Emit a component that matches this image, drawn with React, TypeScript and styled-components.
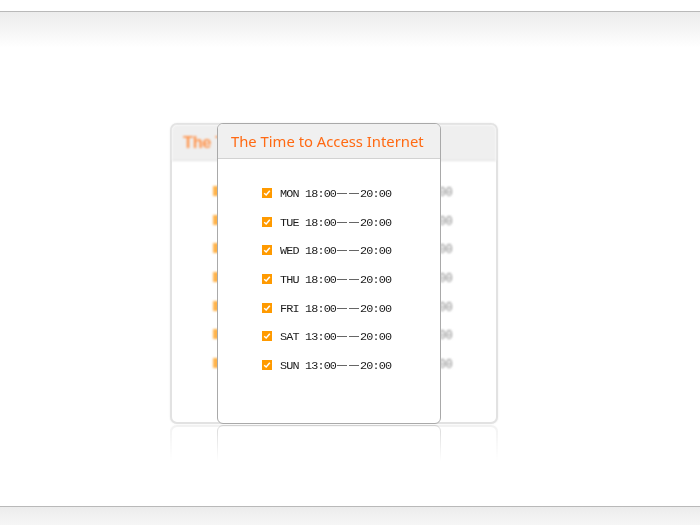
import React from 'react';
import styled, { createGlobalStyle } from 'styled-components';

const GlobalStyle = createGlobalStyle`
  html, body {
    margin: 0;
    padding: 0;
    background: #fff;
  }
`;

const Page = styled.div`
  width: 700px;
  height: 525px;
  display: flex;
  flex-direction: column;
  overflow: hidden;
  background: #fff;
`;

const TopBar = styled.div`
  height: 11px;
  flex: none;
  border-bottom: 1px solid #b9b9b9;
`;

const TopShade = styled.div`
  height: 36px;
  flex: none;
  background: linear-gradient(to bottom, #ececec, #ffffff);
`;

const Stage = styled.div`
  flex: 1;
  padding: 75px 0 0 170px;
`;

const BottomBar = styled.div`
  height: 18px;
  flex: none;
  border-top: 1px solid #b9b9b9;
  background: linear-gradient(to bottom, #ececec, #f6f6f6);
`;

const Holder = styled.div`
  position: relative;
  width: 328px;
  height: 301px;
`;

const BackCard = styled.div`
  width: 328px;
  height: 301px;
  box-sizing: border-box;
  border: 2px solid #e2e2e2;
  border-radius: 7px;
  background: #fff;
  box-shadow: 0 0 2px rgba(0, 0, 0, 0.08);
  -webkit-box-reflect: below 1px linear-gradient(transparent 88%, rgba(255, 255, 255, 0.45));
`;

const BackInner = styled.div`
  filter: blur(0.8px);
`;

const BackHeader = styled.div`
  height: 35px;
  background: #efefef;
  border-bottom: 1px solid #e0e0e0;
  border-radius: 5px 5px 0 0;
  display: flex;
  align-items: center;
  padding-left: 11px;
  font-family: 'Liberation Sans', Arial, sans-serif;
  font-size: 16.5px;
  letter-spacing: -0.4px;
  font-weight: bold;
  color: #ff9650;
  white-space: nowrap;
  overflow: hidden;
`;

const BackList = styled.div`
  padding: 25px 44px 0 41px;
  display: flex;
  flex-direction: column;
`;

const BackRow = styled.div`
  height: 28.7px;
  display: flex;
  align-items: flex-start;
  justify-content: space-between;
  font-family: 'Liberation Mono', monospace;
  font-size: 12px;
  letter-spacing: -0.6px;
  color: #888;
`;

const FrontCard = styled.div`
  position: absolute;
  left: 47px;
  top: 0;
  width: 224px;
  height: 301px;
  box-sizing: border-box;
  border: 1px solid #a9a9a9;
  border-radius: 6px;
  background: #fff;
  overflow: hidden;
  -webkit-box-reflect: below 1px linear-gradient(transparent 88%, rgba(255, 255, 255, 0.45));
`;

const Header = styled.div`
  height: 35px;
  background: #f0f0f0;
  border-bottom: 1px solid #d2d2d2;
  display: flex;
  align-items: center;
  padding: 0 0 0 13px;
  box-sizing: border-box;
  font-family: 'Noto Sans', 'Liberation Sans', sans-serif;
  font-size: 14.8px;
  color: #ff6a13;
`;

const List = styled.div`
  padding: 29px 0 0 44px;
  display: flex;
  flex-direction: column;
`;

const Row = styled.div`
  height: 28.7px;
  display: flex;
  align-items: flex-start;
  gap: 8px;
`;

const Check = styled.span<{ $faded?: boolean }>`
  width: 10px;
  height: 10px;
  margin-top: 0;
  flex: none;
  background: ${(p) => (p.$faded ? '#ffb34a' : '#ff9a00')};
  display: flex;
  align-items: center;
  justify-content: center;
`;

const Label = styled.span`
  display: flex;
  align-items: center;
  font-family: 'Liberation Mono', monospace;
  font-size: 11.8px;
  letter-spacing: -0.85px;
  color: #1c1c1c;
  line-height: 12px;
  white-space: nowrap;
`;

const Dash = styled.span`
  display: inline-block;
  width: 12px;
  text-align: center;
  font-family: 'Liberation Sans', sans-serif;
  font-size: 10px;
  letter-spacing: 0;
  color: #333;
  margin-top: -2px;
`;

const schedule = [
  { day: 'MON', from: '18:00', to: '20:00' },
  { day: 'TUE', from: '18:00', to: '20:00' },
  { day: 'WED', from: '18:00', to: '20:00' },
  { day: 'THU', from: '18:00', to: '20:00' },
  { day: 'FRI', from: '18:00', to: '20:00' },
  { day: 'SAT', from: '13:00', to: '20:00' },
  { day: 'SUN', from: '13:00', to: '20:00' },
];

const Tick = () => (
  <svg width="8" height="8" viewBox="0 0 8 8">
    <path d="M1.2 4.2 L3.2 6 L6.8 1.8" fill="none" stroke="#fff" strokeWidth="1.5" />
  </svg>
);

const App: React.FC = () => (
  <>
    <GlobalStyle />
    <Page>
      <TopBar />
      <TopShade />
      <Stage>
        <Holder>
          <BackCard>
            <BackInner>
              <BackHeader>The Time to Access Internet</BackHeader>
              <BackList>
                {schedule.map((s) => (
                  <BackRow key={s.day}>
                    <Check $faded />
                    <span>
                      {s.day} {s.from}——{s.to}
                    </span>
                  </BackRow>
                ))}
              </BackList>
            </BackInner>
          </BackCard>
          <FrontCard>
            <Header>The Time to Access Internet</Header>
            <List>
              {schedule.map((s) => (
                <Row key={s.day}>
                  <Check>
                    <Tick />
                  </Check>
                  <Label>
                    {s.day}&nbsp;{s.from}
                    <Dash>—</Dash>
                    <Dash>—</Dash>
                    {s.to}
                  </Label>
                </Row>
              ))}
            </List>
          </FrontCard>
        </Holder>
      </Stage>
      <BottomBar />
    </Page>
  </>
);

export default App;
